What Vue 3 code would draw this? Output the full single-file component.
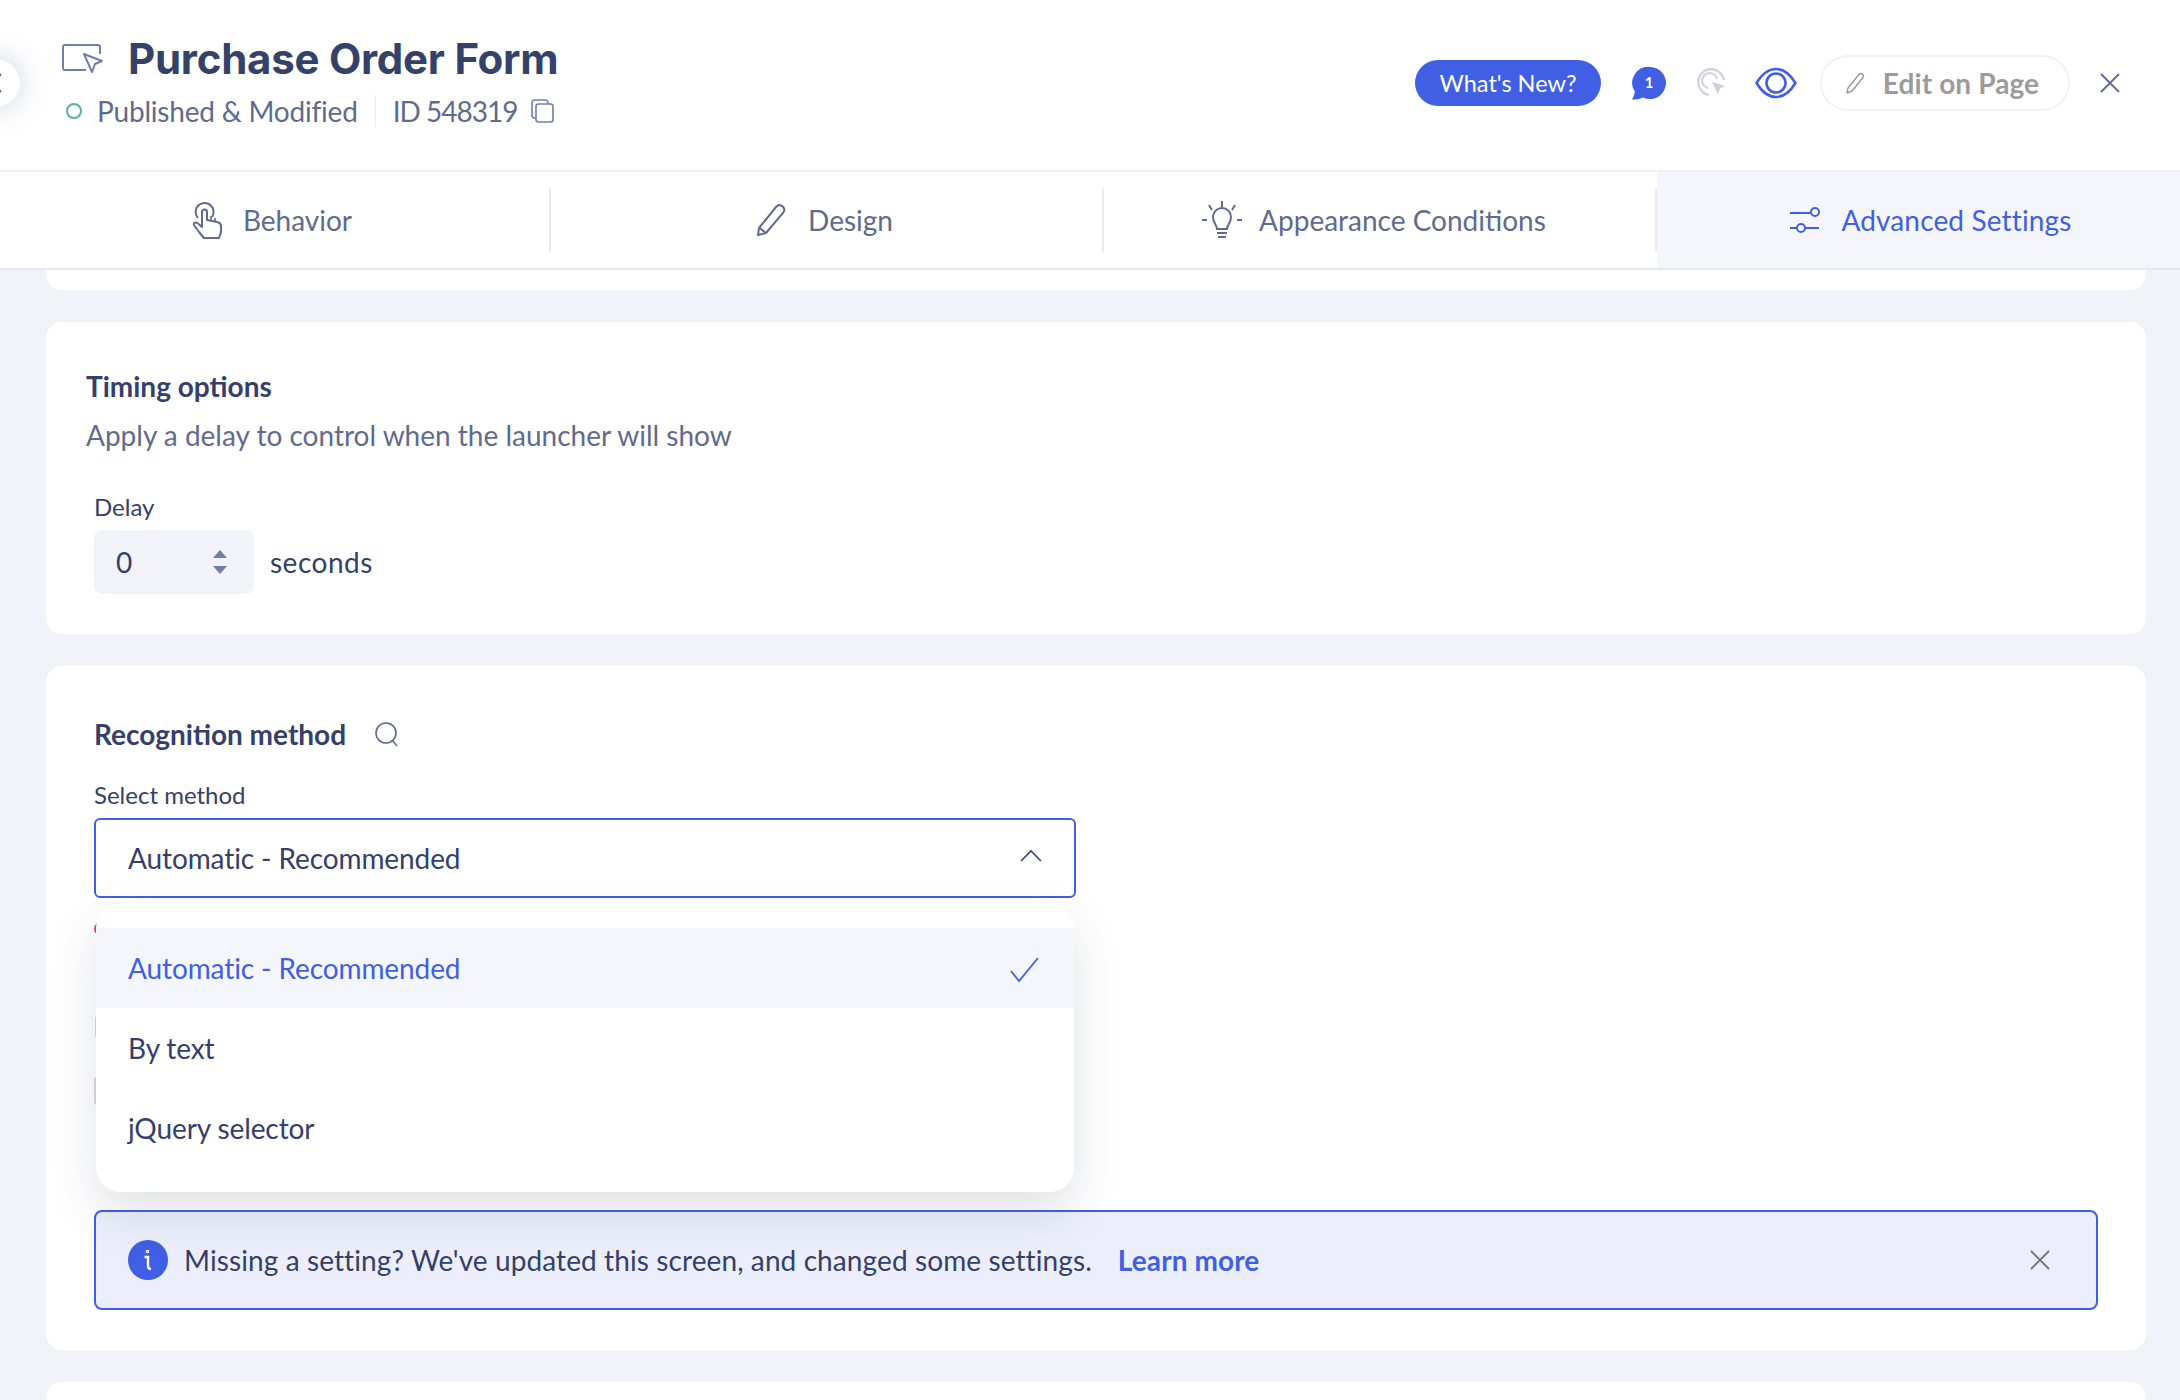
<template>
  <div class="page">
    <header class="topbar">
      <div class="back-btn">
        <svg width="8" height="26" viewBox="0 0 8 26"><path d="M7 4L-1 13L7 22" fill="none" stroke="#5f6b8e" stroke-width="2" /></svg>
      </div>
      <div class="title-block">
        <div class="title-row">
          <svg class="launcher-icon" width="42" height="32" viewBox="0 0 42 32" fill="none" stroke="#6f7fa8" stroke-width="2">
            <path d="M24 26H3a2 2 0 0 1-2-2V3a2 2 0 0 1 2-2h33a2 2 0 0 1 2 2v7" />
            <path d="M22 10l18 7-7 3-3 8z" fill="#fff" stroke-linejoin="round" />
          </svg>
          <h1>Purchase Order Form</h1>
        </div>
        <div class="status-row">
          <span class="status-dot"></span>
          <span>Published &amp; Modified</span>
          <span class="status-sep"></span>
          <span class="status-id">ID 548319</span>
          <svg class="copy-icon" width="24" height="24" viewBox="0 0 24 24" fill="none" stroke="#6f7fa8" stroke-width="1.6">
            <rect x="5" y="5" width="17" height="18" rx="2.5" />
            <path d="M5 19H3.500A2.500 2.500 0 0 1 1 16.500V3.500A2.500 2.500 0 0 1 3.500 1h11A2.500 2.500 0 0 1 17 3.500V5" />
          </svg>
        </div>
      </div>
      <div class="top-actions">
        <button class="whats-new">What's New?</button>
        <div class="chat-icon">
          <svg width="34" height="34" viewBox="0 0 34 34"><path d="M18 1a16 16 0 1 1-7 30.400C8 33 4 33.600 0 33.600c1.500-2.500 2.500-5 2.800-8A16 16 0 0 1 18 1z" fill="#415fe4" /></svg>
          <span>1</span>
        </div>
        <svg class="click-icon" width="30" height="30" viewBox="0 0 30 30" fill="none" stroke="#cdd2de" stroke-width="2.200">
          <path d="M12 27A13 13 0 1 1 27 12" />
          <path d="M11 20a7.500 7.500 0 1 1 9-9" />
          <path d="M15 14l13 4-5 2.500-2 6z" fill="#cdd2de" stroke="none" />
        </svg>
        <svg class="eye-icon" width="42" height="32" viewBox="0 0 42 32" fill="none" stroke="#415fe4" stroke-width="2.600">
          <path d="M1.500 16C7 7 13 2 21 2s14 5 19.500 14C35 25 29 30 21 30S7 25 1.500 16z" />
          <circle cx="21" cy="16" r="9.500" />
        </svg>
        <button class="edit-btn">
          <svg width="20" height="22" viewBox="0 0 20 22" fill="none" stroke="#9b9b9b" stroke-width="1.500">
            <path d="M2 16L13 2.500c1-1.200 2.500-1.200 3.500-.3s1.200 2.300.3 3.500L6 19l-5 2z" stroke-linejoin="round" />
          </svg>
          Edit on Page
        </button>
        <svg class="close-icon" width="22" height="22" viewBox="0 0 22 22" stroke="#5f6b8e" stroke-width="1.800"><path d="M2 2l18 18M20 2L2 20" /></svg>
      </div>
    </header>

    <nav class="tabs">
      <div class="tab">
        <svg width="30" height="38" viewBox="0 0 30 38" fill="none" stroke="#5f6b8e" stroke-width="2">
          <path d="M5 17a9 9 0 1 1 14-1" />
          <path d="M9 26V11a2.500 2.500 0 0 1 5 0v8l10 2c2 .5 4 2 4 4v6l-2 6H11l-5-6-5-7c-.8-1.500 1.500-3.500 3.500-2z" stroke-linejoin="round" />
          <path d="M14 19v-6M18 20v-5M22 21v-4" stroke-width="1.600" />
        </svg>
        <span>Behavior</span>
      </div>
      <div class="tab">
        <svg width="32" height="32" viewBox="0 0 32 32" fill="none" stroke="#5f6b8e" stroke-width="2">
          <path d="M3 24L20 3c2-2.200 4.500-2.200 6.500-.6s2.300 4 .7 6.200L10 29l-8 2z" stroke-linejoin="round" />
          <path d="M3.500 24l6.500 5" />
        </svg>
        <span>Design</span>
      </div>
      <div class="tab">
        <svg width="40" height="38" viewBox="0 0 40 38" fill="none" stroke="#5f6b8e" stroke-width="2">
          <path d="M20 0v6M7 4l3 5M33 4l-3 5M0 19h5M35 19h5" />
          <path d="M15 28c0-4-4-6-4-12a9 9 0 0 1 18 0c0 6-4 8-4 12z" />
          <path d="M15 32h10M16 36h8" stroke-width="2.200" />
        </svg>
        <span>Appearance Conditions</span>
      </div>
      <div class="tab active">
        <svg width="32" height="28" viewBox="0 0 32 28" fill="none" stroke="#415fe4" stroke-width="2">
          <path d="M1 7h21M1 22h8M16 22h14" />
          <circle cx="26" cy="6" r="4" />
          <circle cx="12" cy="22" r="4" />
        </svg>
        <span>Advanced Settings</span>
      </div>
    </nav>

    <main class="content">
      <section class="card card-stub"></section>

      <section class="card timing-card">
        <h3>Timing options</h3>
        <p class="subtitle">Apply a delay to control when the launcher will show</p>
        <div class="delay-block">
          <label>Delay</label>
          <div class="delay-row">
            <div class="number-input">
              <span>0</span>
              <div class="spin">
                <i class="up"></i>
                <i class="down"></i>
              </div>
            </div>
            <span class="unit">seconds</span>
          </div>
        </div>
      </section>

      <section class="card method-card">
        <div class="method-head">
          <h3>Recognition method</h3>
          <svg width="26" height="26" viewBox="0 0 26 26" fill="none" stroke="#5f6b8e" stroke-width="1.600">
            <circle cx="12" cy="12" r="10" />
            <path d="M18 19l5 6" />
          </svg>
        </div>
        <label class="select-label">Select method</label>
        <div class="select-wrap">
          <div class="select-box">
            <span>Automatic - Recommended</span>
            <svg class="chevron" width="22" height="14" viewBox="0 0 22 14" fill="none" stroke="#39466e" stroke-width="1.600"><path d="M1 12L11 2l10 10" /></svg>
          </div>
          <div class="under">
            <div class="peek peek-red"></div>
            <div class="peek peek-line"></div>
            <div class="peek peek-input"></div>
          </div>
          <ul class="dropdown">
            <li v-for="opt in options" :key="opt" :class="{ selected: opt === selected }">
              <span>{{ opt }}</span>
              <svg v-if="opt === selected" class="check" width="30" height="26" viewBox="0 0 30 26" fill="none" stroke="#415fe4" stroke-width="1.800"><path d="M1 14l8 10L28 1" /></svg>
            </li>
          </ul>
        </div>
        <div class="banner">
          <span class="info-dot">
            <svg width="10" height="22" viewBox="0 0 10 22" fill="none" stroke="#fff" stroke-width="2.400"><path d="M1.500 8H5v9c0 2 1 3 3 3" /><circle cx="4.500" cy="2.500" r=".6" /></svg>
          </span>
          <span class="banner-text">Missing a setting? We've updated this screen, and changed some settings.</span>
          <a class="learn">Learn more</a>
          <svg class="banner-close" width="20" height="20" viewBox="0 0 20 20" stroke="#6b7389" stroke-width="1.800"><path d="M1 1l18 18M19 1L1 19" /></svg>
        </div>
      </section>

      <section class="card card-next"></section>
    </main>
  </div>
</template>

<script setup>
const options = ['Automatic - Recommended', 'By text', 'jQuery selector']
const selected = 'Automatic - Recommended'
</script>

<style>
html,
body {
  margin: 0;
  background: #f1f3f8;
}
</style>

<style scoped>
.page {
  width: 2180px;
  height: 1400px;
  overflow: hidden;
  background: #f1f3f8;
  font-family: Lato, "Liberation Sans", sans-serif;
  color: #34406b;
  position: relative;
}

.topbar {
  height: 170px;
  background: #fff;
  border-bottom: 2px solid #eef0f7;
  display: flex;
  align-items: flex-start;
  justify-content: space-between;
  padding: 0 59px 0 62px;
  position: relative;
  overflow: hidden;
}

.back-btn {
  position: absolute;
  left: -30px;
  top: 59px;
  width: 50px;
  height: 48px;
  border-radius: 50%;
  background: #fff;
  box-shadow: 0 0 30px rgba(80, 90, 140, 0.28);
  display: flex;
  align-items: center;
  justify-content: flex-end;
}

.back-btn svg {
  margin-right: 18px;
}

.title-block {
  padding-top: 35px;
}

.title-row {
  display: flex;
  align-items: center;
  gap: 24px;
}

.launcher-icon {
  flex: none;
  margin-top: 2px;
}

h1 {
  margin: 0;
  font-family: Inter, sans-serif;
  font-size: 42px;
  line-height: 48px;
  font-weight: 700;
  color: #344269;
  letter-spacing: -0.25px;
}

.status-row {
  display: flex;
  align-items: center;
  margin-top: 11px;
  font-size: 28px;
  line-height: 34px;
  color: #5f6b8e;
  padding-left: 4px;
  letter-spacing: -0.2px;
}

.status-dot {
  width: 12px;
  height: 12px;
  border: 2px solid #55b59c;
  border-radius: 50%;
  margin-right: 15px;
}

.status-sep {
  width: 1px;
  height: 32px;
  background: #e8eaf2;
  margin: 0 17px;
}

.status-id {
  letter-spacing: -1px;
}

.copy-icon {
  margin-left: 14px;
}

.top-actions {
  display: flex;
  align-items: center;
  padding-top: 55px;
}

.whats-new {
  width: 186px;
  height: 46px;
  border: 0;
  border-radius: 23px;
  background: #415fe4;
  color: #fff;
  font-family: inherit;
  font-size: 23.5px;
}

.chat-icon {
  position: relative;
  width: 34px;
  height: 34px;
  margin-left: 31px;
}

.chat-icon span {
  position: absolute;
  inset: 0;
  color: #fff;
  font-size: 15px;
  font-weight: 700;
  text-align: center;
  line-height: 33px;
}

.click-icon {
  margin-left: 31px;
}

.eye-icon {
  margin-left: 28px;
}

.edit-btn {
  width: 250px;
  height: 56px;
  margin-left: 23px;
  padding: 0 5px 0 0;
  border: 2px solid #f1f2f5;
  border-radius: 28px;
  background: #fff;
  color: #9b9b9b;
  font-family: inherit;
  font-size: 28px;
  font-weight: 700;
  letter-spacing: 0.1px;
  display: flex;
  align-items: center;
  justify-content: center;
  gap: 17px;
}

.close-icon {
  margin-left: 29px;
}

.tabs {
  height: 96px;
  background: #fff;
  border-bottom: 2px solid #e4e8f6;
  display: grid;
  grid-template-columns: 551px 553px 553px 523px;
}

.tab {
  display: flex;
  align-items: center;
  justify-content: center;
  gap: 20px;
  font-size: 28px;
  color: #5f6b8e;
  position: relative;
}

.tab:nth-child(1) {
  padding-right: 6px;
}

.tab:nth-child(2) {
  padding-right: 6px;
}

.tab:nth-child(3) {
  padding-right: 13px;
  gap: 17px;
}

.tab::after {
  content: "";
  position: absolute;
  right: 0;
  top: 16px;
  bottom: 16px;
  width: 2px;
  background: #e8ebf6;
}

.tab.active {
  background: #f4f6fb;
  color: #415fe4;
  padding-left: 24px;
  letter-spacing: 0.15px;
}

.tab.active::after {
  display: none;
}

.content {
  padding: 0 34px 0 46px;
}

.card {
  background: #fff;
  border-radius: 16px;
  margin-bottom: 32px;
}

.card-stub {
  height: 20px;
  border-radius: 0 0 16px 16px;
}

.timing-card {
  height: 312px;
  padding: 49px 40px 0;
  box-sizing: border-box;
}

h3 {
  margin: 0;
  font-size: 28px;
  line-height: 30px;
  font-weight: 700;
  color: #34406b;
}

.subtitle {
  margin: 17px 0 0;
  font-size: 28px;
  line-height: 34px;
  color: #5f6b8e;
}

.delay-block {
  margin: 41px 0 0 8px;
}

label {
  display: block;
  font-size: 24px;
  line-height: 28px;
}

.delay-row {
  display: flex;
  align-items: center;
  gap: 16px;
  margin-top: 9px;
}

.number-input {
  width: 160px;
  height: 64px;
  box-sizing: border-box;
  padding: 0 27px 0 22px;
  background: #f1f3f8;
  border-radius: 8px;
  display: flex;
  align-items: center;
  justify-content: space-between;
  font-size: 28px;
}

.spin {
  display: flex;
  flex-direction: column;
  gap: 8px;
}

.spin i {
  display: block;
  width: 0;
  height: 0;
  border-left: 7px solid transparent;
  border-right: 7px solid transparent;
}

.spin .up {
  border-bottom: 8px solid #6f7fa8;
}

.spin .down {
  border-top: 8px solid #6f7fa8;
}

.unit {
  font-size: 28px;
  letter-spacing: 0.5px;
}

.method-card {
  height: 684px;
  box-sizing: border-box;
  padding: 53px 48px 0;
}

.method-head {
  display: flex;
  align-items: center;
  gap: 28px;
  height: 30px;
}

.select-label {
  margin-top: 32px;
}

.select-wrap {
  position: relative;
  margin-top: 9px;
  width: 982px;
}

.select-box {
  height: 80px;
  box-sizing: border-box;
  border: 2px solid #415fe4;
  border-radius: 6px;
  background: #fff;
  padding: 0 32px;
  display: flex;
  align-items: center;
  justify-content: space-between;
  font-size: 28px;
  letter-spacing: -0.1px;
}

.chevron {
  margin-top: -4px;
}

.under {
  height: 312px;
  box-sizing: border-box;
  padding-top: 23px;
}

.peek {
  width: 20px;
}

.peek-red {
  height: 16px;
  border-radius: 50%;
  background: #e2474b;
}

.peek-line {
  height: 20px;
  margin-top: 80px;
  margin-left: 1px;
  background: #d8dbe4;
}

.peek-input {
  height: 28px;
  margin-top: 40px;
  border-radius: 3px;
  background: #d8dbe4;
}

.dropdown {
  position: absolute;
  left: 2px;
  right: 2px;
  top: 86px;
  margin: 0;
  padding: 24px 0;
  list-style: none;
  background: #fff;
  border-radius: 24px;
  box-shadow: 0 20px 48px rgba(40, 50, 80, 0.14);
  z-index: 5;
}

.dropdown li {
  height: 80px;
  padding: 0 34px 0 32px;
  display: flex;
  align-items: center;
  justify-content: space-between;
  font-size: 28px;
  letter-spacing: -0.1px;
}

.dropdown li.selected {
  background: #f4f6fb;
  color: #415fe4;
}

.check {
  margin-top: 3px;
}

.banner {
  width: 2004px;
  height: 100px;
  box-sizing: border-box;
  border: 2px solid #415fe4;
  border-radius: 8px;
  background: #eceffb;
  display: flex;
  align-items: center;
  padding: 0 46px 0 32px;
  font-size: 28px;
  letter-spacing: 0.1px;
}

.info-dot {
  flex: none;
  width: 40px;
  height: 40px;
  border-radius: 50%;
  background: #415fe4;
  display: flex;
  align-items: center;
  justify-content: center;
}

.banner-text {
  margin-left: 16px;
}

.learn {
  margin-left: 26px;
  font-weight: 700;
  color: #415fe4;
}

.banner-close {
  margin-left: auto;
}

.card-next {
  height: 80px;
}
</style>
